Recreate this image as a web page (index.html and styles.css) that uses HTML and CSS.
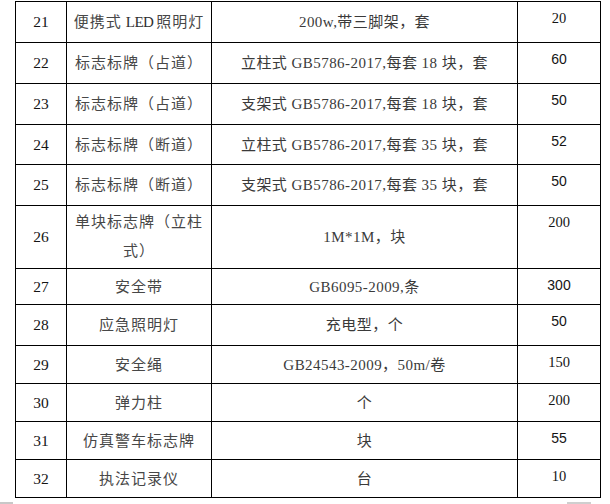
FILE: index.html
```html
<!DOCTYPE html>
<html lang="zh-CN">
<head>
<meta charset="utf-8">
<title>物资清单</title>
<link rel="stylesheet" href="styles.css">
</head>
<body>
<div class="list">
  <div class="cell no">21</div><div class="cell name">便携式<span class="lat">LED</span>照明灯</div><div class="cell spec">200w,带三脚架，套</div><div class="cell qty serif">20</div>
  <div class="cell no">22</div><div class="cell name">标志标牌（占道）</div><div class="cell spec">立柱式 GB5786-2017,每套 18 块，套</div><div class="cell qty">60</div>
  <div class="cell no">23</div><div class="cell name">标志标牌（占道）</div><div class="cell spec">支架式 GB5786-2017,每套 18 块，套</div><div class="cell qty">50</div>
  <div class="cell no">24</div><div class="cell name">标志标牌（断道）</div><div class="cell spec">立柱式 GB5786-2017,每套 35 块，套</div><div class="cell qty">52</div>
  <div class="cell no">25</div><div class="cell name">标志标牌（断道）</div><div class="cell spec">支架式 GB5786-2017,每套 35 块，套</div><div class="cell qty">50</div>
  <div class="cell no">26</div><div class="cell name wrap">单块标志牌（立柱式）</div><div class="cell spec">1M*1M，块</div><div class="cell qty serif">200</div>
  <div class="cell no">27</div><div class="cell name">安全带</div><div class="cell spec">GB6095-2009,条</div><div class="cell qty">300</div>
  <div class="cell no">28</div><div class="cell name">应急照明灯</div><div class="cell spec">充电型，个</div><div class="cell qty">50</div>
  <div class="cell no">29</div><div class="cell name">安全绳</div><div class="cell spec">GB24543-2009，50m/卷</div><div class="cell qty serif">150</div>
  <div class="cell no">30</div><div class="cell name">弹力柱</div><div class="cell spec">个</div><div class="cell qty serif">200</div>
  <div class="cell no">31</div><div class="cell name">仿真警车标志牌</div><div class="cell spec">块</div><div class="cell qty">55</div>
  <div class="cell no">32</div><div class="cell name">执法记录仪</div><div class="cell spec">台</div><div class="cell qty serif">10</div>
</div>
<div class="edge">
  <span class="edge-left"></span>
  <span class="edge-right"></span>
</div>
</body>
</html>
```
FILE: styles.css
```css
html, body {
  margin: 0;
  padding: 0;
  background: #ffffff;
}
body {
  padding-top: 1px;
  width: 610px;
  height: 504px;
  box-sizing: border-box;
  overflow: hidden;
  font-family: "Liberation Serif", "Noto Sans CJK SC", serif;
  color: #222;
}
.list {
  margin-left: 15px;
  width: 586px;
  box-sizing: border-box;
  display: grid;
  grid-template-columns: 50px 144px 305px 82px;
  grid-template-rows: 40px 40px 40px 39px 40px 62px 35px 40px 37px 37px 37px 37px;
  gap: 1px;
  padding: 1px;
  background: #000;
}
.cell {
  background: #fff;
  display: flex;
  align-items: center;
  justify-content: center;
  text-align: center;
  font-size: 15px;
  line-height: 20px;
  color: #2e2e2e;
  white-space: nowrap;
  overflow: visible;
}
.no {
  font-size: 15.5px;
  color: #141414;
}
.name {
  letter-spacing: 1px;
  color: #474747;
}
.lat {
  letter-spacing: -0.6px;
  margin: 0 3px 0 4px;
  color: #2e2e2e;
}
.wrap {
  white-space: normal;
  line-height: 29px;
  padding: 0 7px;
}
.spec {
  letter-spacing: 0.45px;
  color: #3a3a3a;
}
.qty {
  align-items: flex-start;
  padding-top: 6px;
  box-sizing: border-box;
  font-family: "Liberation Sans", sans-serif;
  font-size: 14px;
  color: #141414;
}
.qty.serif {
  font-family: "Liberation Serif", serif;
  font-size: 14.5px;
}
.edge {
  display: flex;
  justify-content: space-between;
  margin-top: 4px;
  width: 591px;
  height: 2px;
}
.edge-left {
  width: 13px;
  background: #c8c8c8;
}
.edge-right {
  width: 24px;
  background: #cfcfcf;
}
```
